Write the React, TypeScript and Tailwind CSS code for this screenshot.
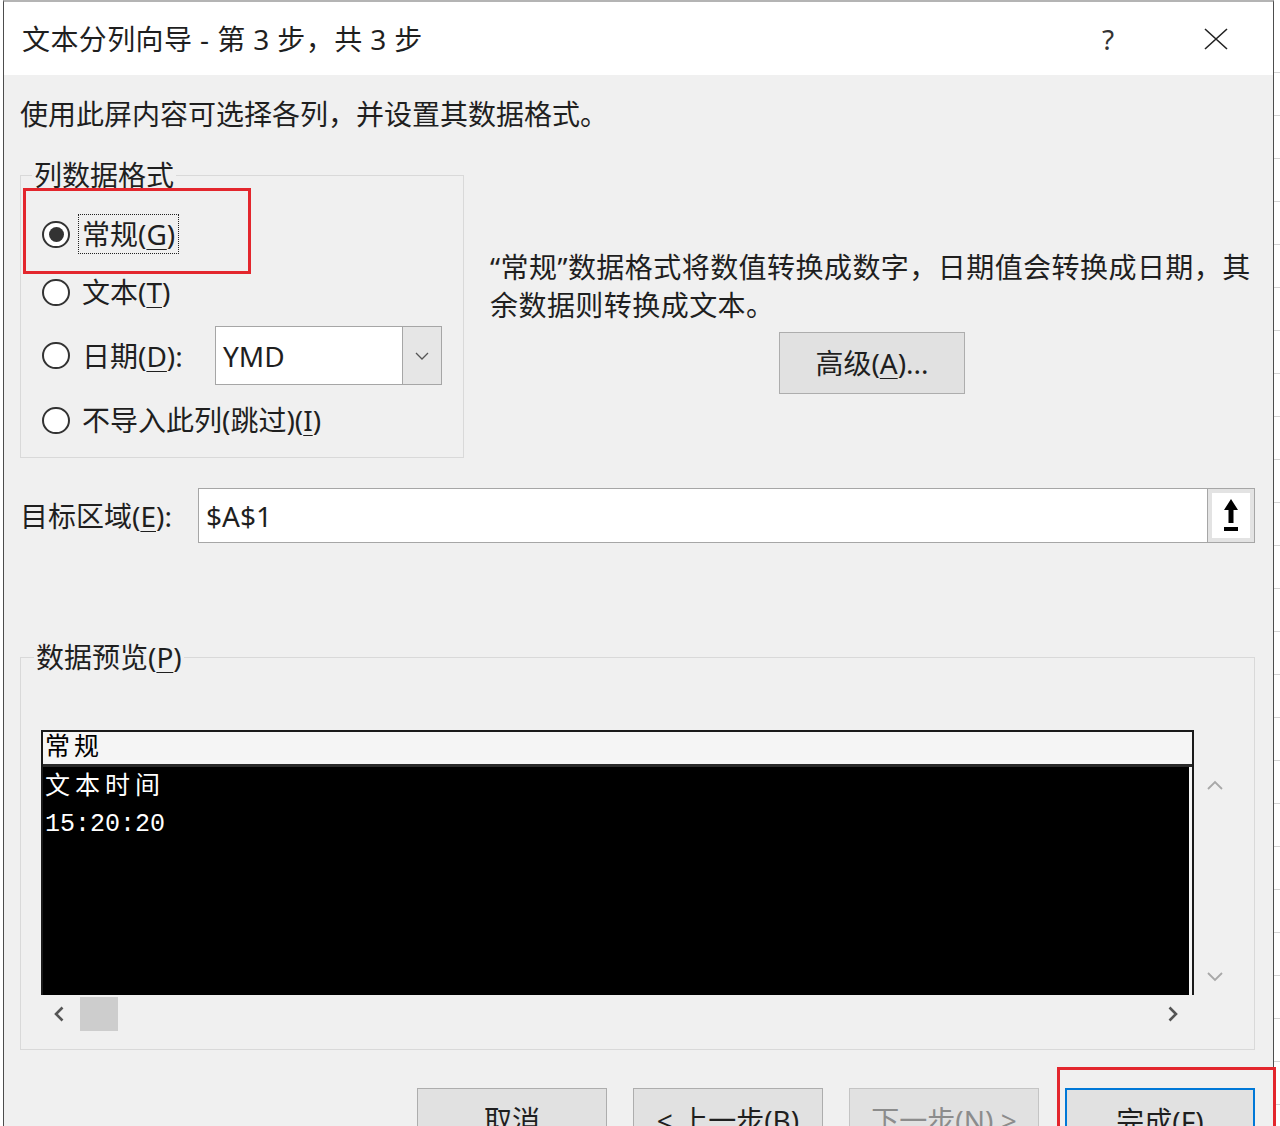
import React from "react";

const Radio = ({ checked = false }: { checked?: boolean }) => (
  <span className="flex h-[27px] w-[28px] shrink-0 items-center justify-center rounded-full border-2 border-[#333] bg-white">
    {checked && <span className="h-[15px] w-[15px] rounded-full bg-[#333]" />}
  </span>
);

// mnemonic letter, underlined like the Windows dialog
const Key = ({ children }: { children: React.ReactNode }) => (
  <span className="underline decoration-1 underline-offset-[4px]">{children}</span>
);

const Btn = ({
  children,
  primary = false,
  disabled = false,
}: {
  children: React.ReactNode;
  primary?: boolean;
  disabled?: boolean;
}) => (
  <button
    className={`flex h-[62px] w-[190px] shrink-0 items-start justify-center bg-[#e1e1e1] pt-[12px] leading-[38px] ${
      primary ? "border-2 border-[#0078d7]" : disabled ? "border border-[#c4c4c4]" : "border border-[#adadad]"
    } ${disabled ? "text-[#8c8c8c]" : "text-[#1f1f1f]"}`}
  >
    {children}
  </button>
);

export default function App() {
  return (
    <div className="relative flex h-[1126px] w-[1280px] overflow-hidden bg-white font-['Noto_Sans','Noto_Sans_CJK_SC',sans-serif] text-[28px] text-[#1f1f1f]">
      <div className="w-[3px] shrink-0 bg-white" />

      <div className="flex w-[1271px] shrink-0 flex-col border-x border-t-2 border-x-[#4d4d4d] border-t-[#b4b4b4]">
        {/* title bar */}
        <div className="flex h-[73px] shrink-0 items-center bg-white pl-[18px] pr-[42px]">
          <span className="leading-none tracking-[0.4px]">文本分列向导 - 第 3 步，共 3 步</span>
          <span className="ml-auto w-[30px] text-center leading-none text-[#333]">?</span>
          <span className="ml-[78px] flex w-[30px] justify-center">
            <svg width="24" height="22" viewBox="0 0 24 22" fill="none" stroke="#222" strokeWidth="1.6">
              <path d="M1 1 L23 21 M23 1 L1 21" />
            </svg>
          </span>
        </div>

        {/* body */}
        <div className="flex flex-1 flex-col bg-[#f0f0f0] pl-[16px] pr-[18px]">
          <p className="mt-[21px] leading-[36px]">使用此屏内容可选择各列，并设置其数据格式。</p>

          <div className="mt-[25px] flex">
            <fieldset className="w-[444px] shrink-0 border border-[#d9d9d9]">
              <legend className="ml-[11px] px-[2px] leading-[36px]">列数据格式</legend>
              <div className="flex flex-col pb-[15px] pl-[21px]">
                <div className="mt-[19px] flex h-[44px] items-center">
                  <Radio checked />
                  <span className="ml-[8px] border border-dotted border-[#222] px-[3px] leading-[38px]">
                    常规(<Key>G</Key>)
                  </span>
                </div>
                <div className="mt-[14px] flex h-[44px] items-center">
                  <Radio />
                  <span className="ml-[12px]">
                    文本(<Key>T</Key>)
                  </span>
                </div>
                <div className="mt-[12px] flex h-[59px] items-center">
                  <Radio />
                  <span className="ml-[12px] w-[133px] shrink-0">
                    日期(<Key>D</Key>):
                  </span>
                  <div className="flex h-[59px] w-[227px] border border-[#a6a6a6] bg-white">
                    <span className="flex flex-1 items-center pl-[7px]">YMD</span>
                    <span className="flex w-[39px] items-center justify-center border-l border-[#a6a6a6] bg-[#e6e6e6]">
                      <svg width="14" height="8" viewBox="0 0 14 8" fill="none" stroke="#555" strokeWidth="1.3">
                        <path d="M1 1 L7 7 L13 1" />
                      </svg>
                    </span>
                  </div>
                </div>
                <div className="mt-[13px] flex h-[44px] items-center">
                  <Radio />
                  <span className="ml-[12px]">
                    不导入此列(跳过)(<Key>I</Key>)
                  </span>
                </div>
              </div>
            </fieldset>

            <div className="ml-[26px] flex flex-col pt-[91px]">
              <p className="whitespace-nowrap leading-[38px] tracking-[0.45px]">
                “常规”数据格式将数值转换成数字，日期值会转换成日期，其
                <br />
                余数据则转换成文本。
              </p>
              <button className="ml-[289px] mt-[8px] flex h-[62px] w-[186px] items-center justify-center border border-[#adadad] bg-[#e1e1e1]">
                高级(<Key>A</Key>)...
              </button>
            </div>
          </div>

          {/* target range */}
          <div className="mt-[30px] flex h-[55px] items-center">
            <span className="w-[178px] shrink-0">
              目标区域(<Key>E</Key>):
            </span>
            <div className="flex h-full flex-1 border border-[#a6a6a6] bg-white">
              <span className="flex flex-1 items-center pl-[7px]">$A$1</span>
              <div className="flex w-[47px] border-l border-[#a6a6a6] bg-[#e3e3e3] p-[4px]">
                <div className="flex flex-1 items-center justify-center bg-white">
                  <svg width="20" height="36" viewBox="0 0 20 36" fill="#000">
                    <path d="M10 1 L17 12 H12.5 V25 H7.5 V12 H3 Z" />
                    <rect x="3" y="29" width="14" height="4" />
                  </svg>
                </div>
              </div>
            </div>
          </div>

          {/* data preview */}
          <fieldset className="mt-[96px] border border-[#d9d9d9] pb-[16px]">
            <legend className="ml-[13px] px-[2px] leading-[36px]">
              数据预览(<Key>P</Key>)
            </legend>
            <div className="mt-[55px] flex flex-col pl-[20px]">
              <div className="flex">
                <div className="flex h-[265px] w-[1153px] flex-col border-x-2 border-t-2 border-[#1a1a1a] bg-[#f5f5f5] font-['Liberation_Mono','Noto_Sans_CJK_SC',monospace] text-[25px]">
                  <div className="flex h-[35px] shrink-0 items-end border-b-[3px] border-[#2a2a2a] pl-[2px] leading-[30px] tracking-[4px] text-black">
                    常规
                  </div>
                  <div className="mr-[3px] flex-1 bg-black pl-[2px] pt-[2px] text-white">
                    <div className="leading-[37px] tracking-[5px]">文本时间</div>
                    <div className="leading-[37px]">15:20:20</div>
                  </div>
                </div>
                <div className="flex h-[265px] w-[41px] flex-col items-center justify-between pb-[13px] pt-[50px]">
                  <svg width="16" height="10" viewBox="0 0 16 10" fill="none" stroke="#a8a8a8" strokeWidth="1.8">
                    <path d="M1 9 L8 2 L15 9" />
                  </svg>
                  <svg width="16" height="10" viewBox="0 0 16 10" fill="none" stroke="#a8a8a8" strokeWidth="1.8">
                    <path d="M1 1 L8 8 L15 1" />
                  </svg>
                </div>
              </div>
              <div className="flex h-[38px] w-[1153px] items-center pl-[13px] pr-[16px]">
                <svg width="10" height="16" viewBox="0 0 10 16" fill="none" stroke="#555" strokeWidth="2.6">
                  <path d="M8.5 1.5 L2 8 L8.5 14.5" />
                </svg>
                <div className="ml-[16px] h-[34px] w-[38px] bg-[#cdcdcd]" />
                <svg className="ml-auto" width="10" height="16" viewBox="0 0 10 16" fill="none" stroke="#555" strokeWidth="2.6">
                  <path d="M1.5 1.5 L8 8 L1.5 14.5" />
                </svg>
              </div>
            </div>
          </fieldset>

          {/* buttons */}
          <div className="mt-[38px] flex justify-end gap-[26px]">
            <Btn>取消</Btn>
            <Btn>
              &lt; 上一步(<Key>B</Key>)
            </Btn>
            <Btn disabled>
              下一步(<Key>N</Key>) &gt;
            </Btn>
            <Btn primary>
              完成(<Key>F</Key>)
            </Btn>
          </div>
        </div>
      </div>

      {/* strip of the worksheet behind the dialog */}
      <div className="flex flex-1 flex-col pt-[30px]">
        {Array.from({ length: 26 }).map((_, i) => (
          <div key={i} className="h-[43px] shrink-0 border-b border-[#d4d4d4]" />
        ))}
      </div>

      {/* red annotation boxes */}
      <div className="absolute left-[23px] top-[188px] h-[86px] w-[228px] border-[3px] border-[#e3262d]" />
      <div className="absolute left-[1057px] top-[1067px] h-[80px] w-[219px] border-[3px] border-[#e3262d]" />
    </div>
  );
}
